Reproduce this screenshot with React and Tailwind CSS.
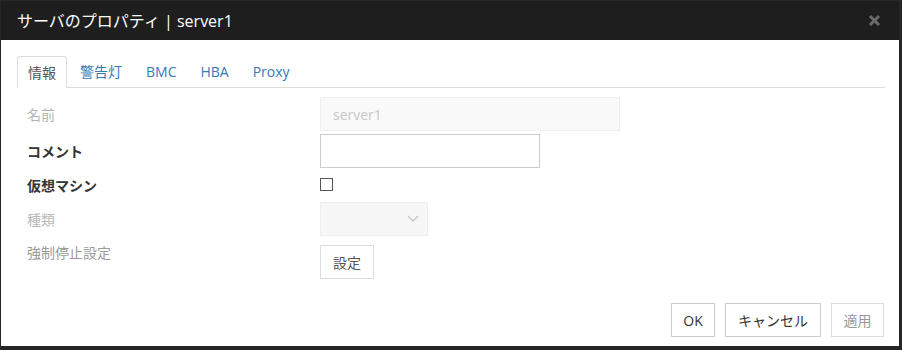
import React from "react";

const font = "font-['Open_Sans','Noto_Sans_CJK_JP',sans-serif]";

export default function App() {
  return (
    <div className={`w-[902px] h-[350px] bg-[#262626] overflow-hidden pt-[1px] pl-[1px] ${font}`}>
      <div className="w-[898px] h-[345px] bg-white flex flex-col">
        {/* header */}
        <div className="h-[39px] bg-[#1e1e1e] flex items-center justify-between pl-[16px] pr-[18px]">
          <span className="text-white text-[16px] leading-[20px]">サーバのプロパティ | server1</span>
          <svg width="13" height="13" viewBox="0 0 13 13">
            <path d="M2 2 L11 11 M11 2 L2 11" stroke="#6a6a6a" strokeWidth="3" strokeLinecap="butt" />
          </svg>
        </div>
        {/* body */}
        <div className="pt-[16px] pl-[16px] pr-[14px] flex flex-col">
          <div className="flex border-b border-[#dddddd] h-[32px]">
            <div className="h-[32px] -mb-px px-[10px] border border-[#dddddd] border-b-white bg-white rounded-t-[3px] mr-[2px] flex items-center text-[14px] text-[#555]">情報</div>
            <div className="h-[31px] px-[11px] mr-[2px] flex items-center text-[14px] text-[#337ab7]">警告灯</div>
            <div className="h-[31px] px-[11px] mr-[2px] flex items-center text-[14px] text-[#337ab7]">BMC</div>
            <div className="h-[31px] px-[11px] mr-[2px] flex items-center text-[14px] text-[#337ab7]">HBA</div>
            <div className="h-[31px] px-[11px] mr-[2px] flex items-center text-[14px] text-[#337ab7]">Proxy</div>
          </div>

          <div className="mt-[9px] flex flex-col pl-[10px]">
            <div className="flex items-center h-[34px]">
              <div className="w-[293px] text-[14px] text-[#b3b3b3]">名前</div>
              <div className="w-[300px] h-[34px] bg-[#f9f9f9] border border-[#efefef] flex items-center pl-[12px] text-[14px] text-[#c8c8c8]">server1</div>
            </div>
            <div className="flex items-center h-[34px] mt-[3px]">
              <div className="w-[293px] text-[14px] font-bold text-[#333]">コメント</div>
              <div className="w-[220px] h-[34px] border border-[#cccccc] bg-white"></div>
            </div>
            <div className="flex items-center h-[34px]">
              <div className="w-[293px] text-[14px] font-bold text-[#333]">仮想マシン</div>
              <div className="w-[13px] h-[13px] border border-[#555] bg-white -mt-[2px]"></div>
            </div>
            <div className="flex items-center h-[34px]">
              <div className="w-[293px] text-[14px] text-[#b8b8b8]">種類</div>
              <div className="w-[108px] h-[34px] bg-[#f7f7f7] border border-[#efefef] flex items-center justify-end pr-[8px]">
                <svg width="12" height="8" viewBox="0 0 12 8">
                  <path d="M1 1 L6 6 L11 1" stroke="#c4c4c4" strokeWidth="1.3" fill="none" />
                </svg>
              </div>
            </div>
            <div className="flex items-start mt-[7px]">
              <div className="w-[293px] text-[14px] leading-[20px] text-[#9a9a9a]">強制停止設定</div>
              <div className="mt-[2px] w-[54px] h-[34px] border border-[#dddddd] flex items-center justify-center text-[14px] text-[#555]">設定</div>
            </div>
          </div>

          <div className="mt-[24px] flex justify-end pr-[1px] gap-[10px]">
            <div className="w-[44px] h-[34px] border border-[#cccccc] flex items-center justify-center text-[14px] text-[#333]">OK</div>
            <div className="w-[96px] h-[34px] border border-[#cccccc] flex items-center justify-center text-[14px] text-[#333]">キャンセル</div>
            <div className="w-[53px] h-[34px] border border-[#dddddd] flex items-center justify-center text-[14px] text-[#999]">適用</div>
          </div>
        </div>
      </div>
    </div>
  );
}
